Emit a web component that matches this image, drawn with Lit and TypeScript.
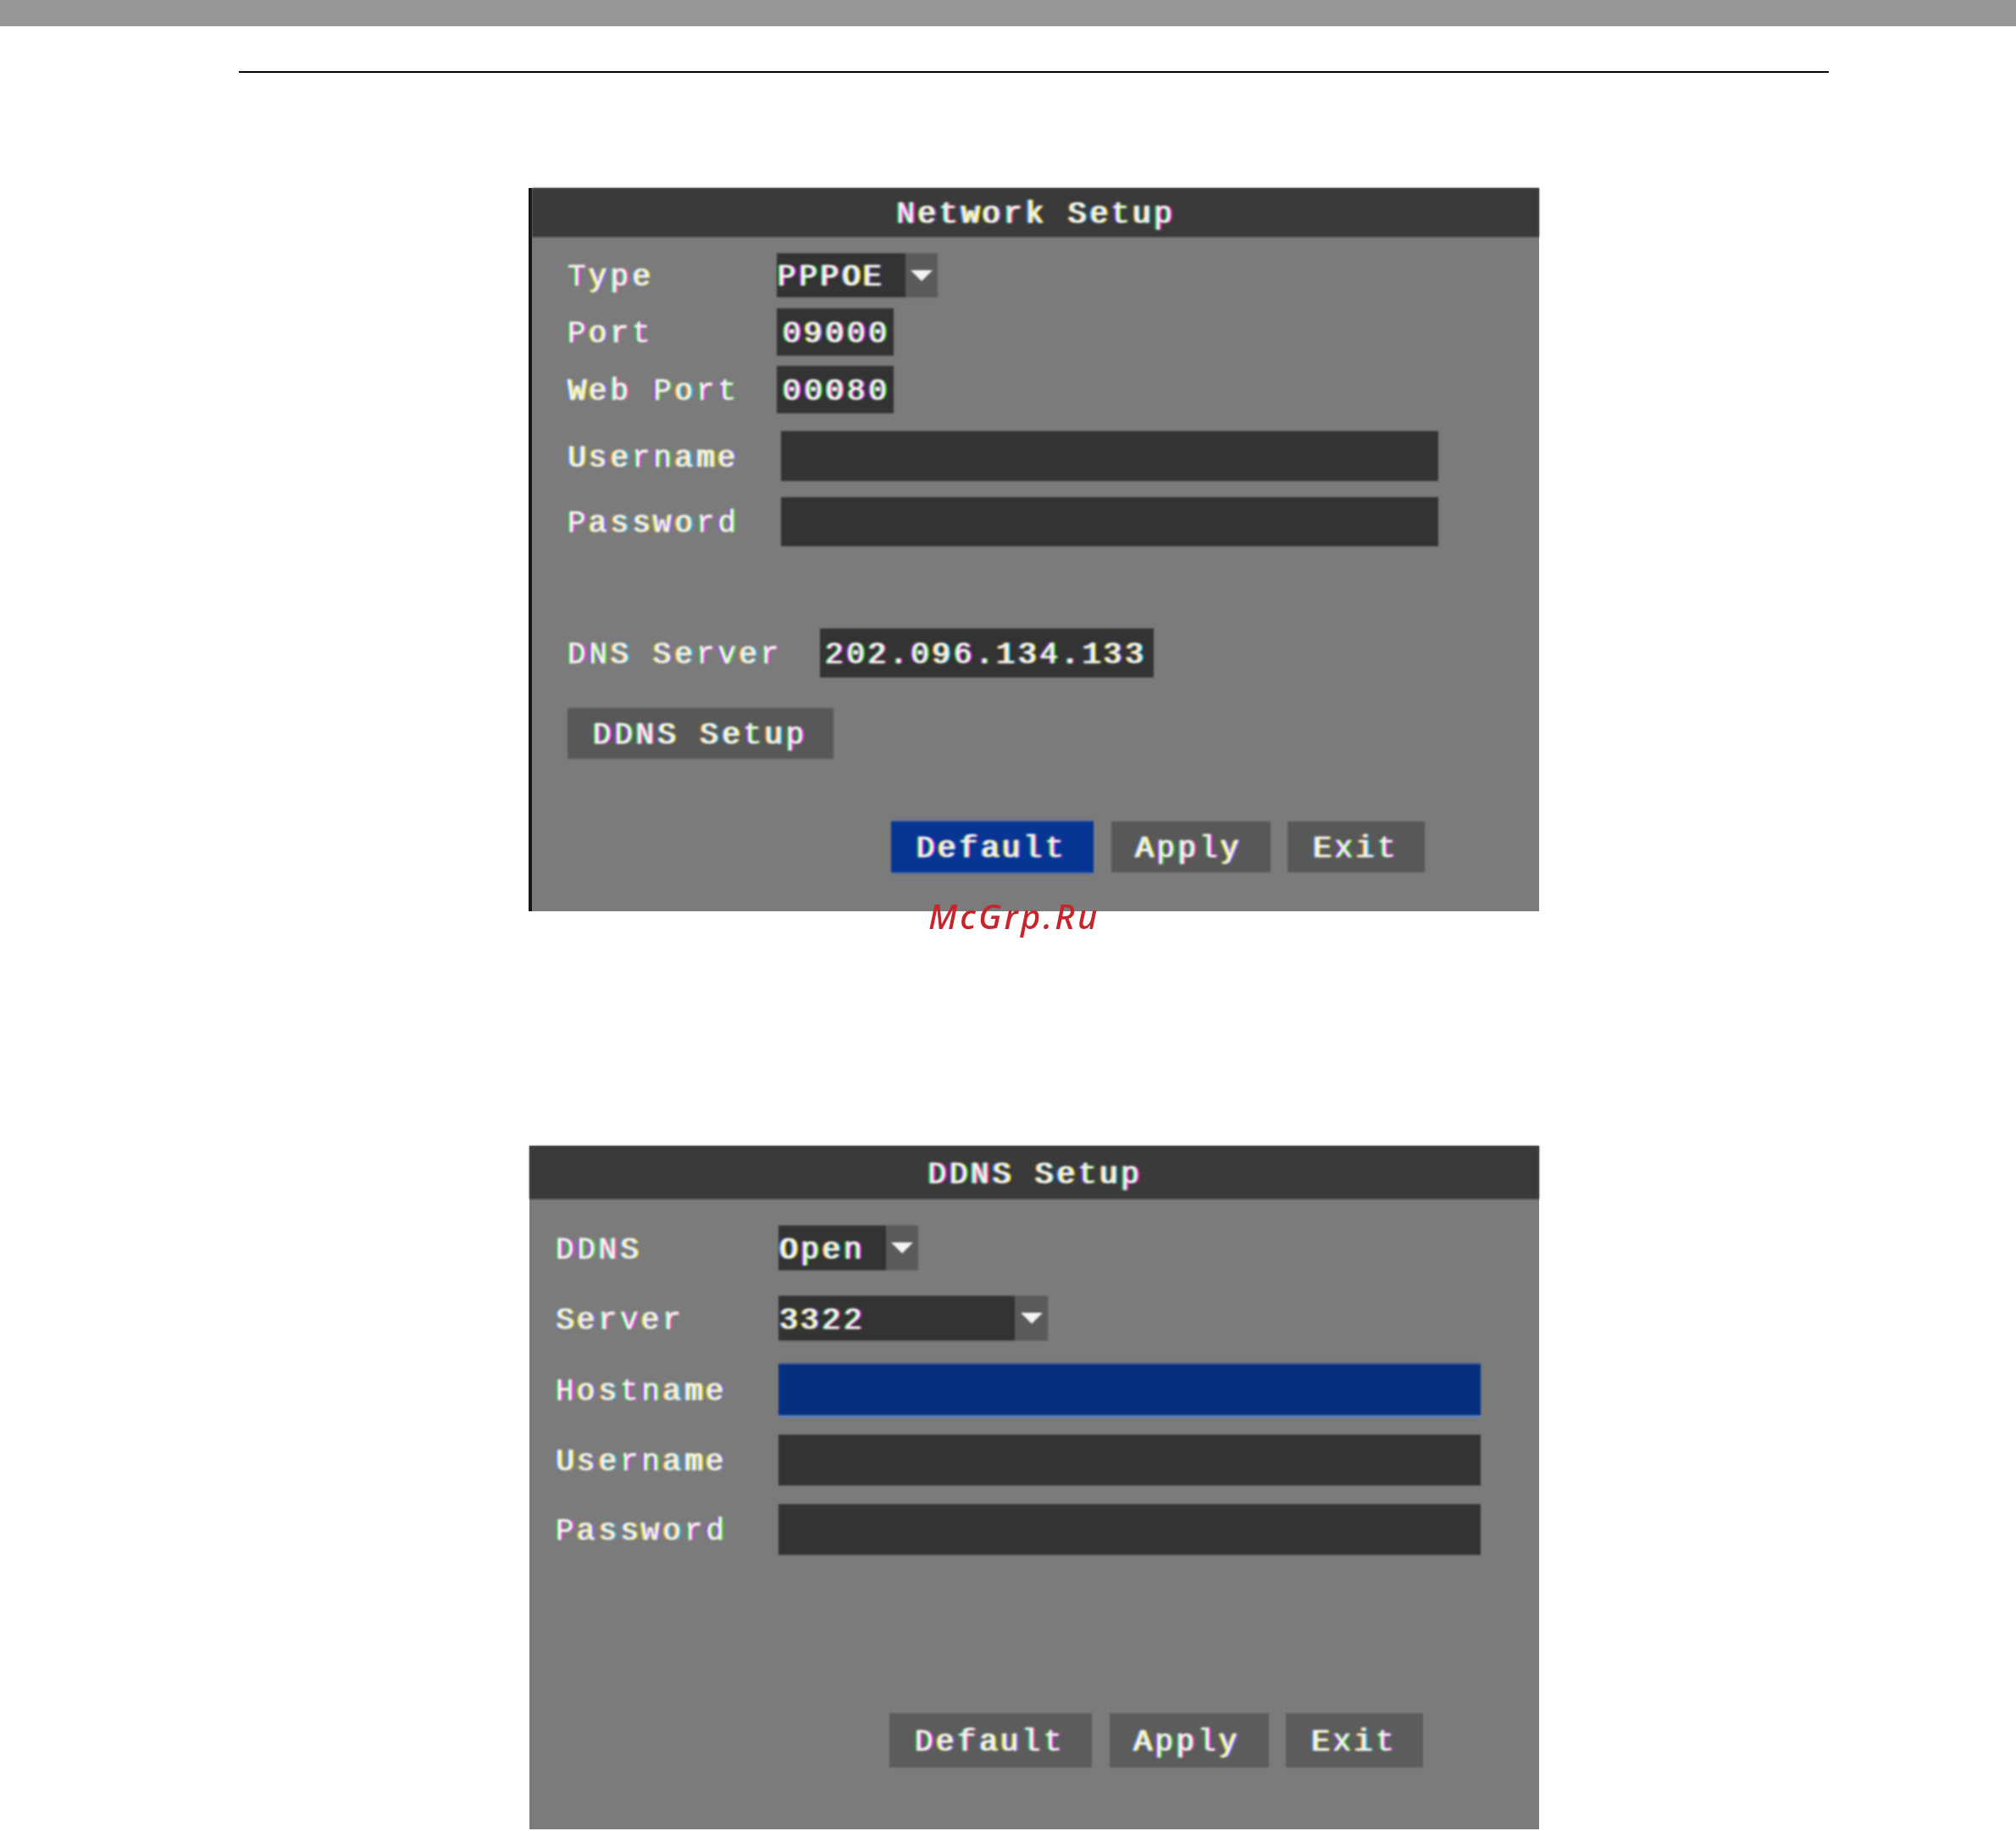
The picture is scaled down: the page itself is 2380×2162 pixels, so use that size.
import { LitElement, html, css } from "lit";
import { customElement } from "lit/decorators.js";

const fringe = (text: string) =>
  html`<span class="txt">${[...text].map((ch, i) =>
    ch === " " ? " " : html`<span class="c${(ch.charCodeAt(0) * 3 + i * 2) % 6}">${ch}</span>`
  )}</span>`;

const arrow = html`<svg class="arrow" viewBox="0 0 26 13"><path d="M0 0h26L13 13z" fill="#f4f4f4" /></svg>`;

@customElement("app-root")
export class AppRoot extends LitElement {
  static styles = css`
    :host { display: block; width: 2380px; height: 2162px; background: #fff; overflow: hidden; position: relative; }
    .band { height: 31px; background: #979797; }
    .rule { height: 2px; background: #000; margin: 53px 221px 0 282px; }
    .panel {
      width: 1193px; margin-left: 624px; background: #7b7b7b; box-sizing: border-box;
      font: 36px/1 "Liberation Mono", monospace; letter-spacing: 3.7px; color: #f4f4ec;
      -webkit-text-stroke: 0.4px #f4f4ec;
      white-space: pre; display: flex; flex-direction: column;
    }
    .txt { position: relative; top: 3px; }
    .soft { filter: blur(0.8px); display: flex; flex-direction: column; flex: 1; }
    .first { margin-top: 136px; height: 854px; border-left: 4px solid #161616; }
    .second { margin-top: 277px; margin-left: 625px; width: 1192px; height: 807px; }
    .title { background: #3a3a3a; display: flex; align-items: center; justify-content: center; height: 58px; padding-left: 1px; }
    .second .title { height: 63px; padding-left: 2px; }
    .rows { padding: 19px 0 0 42px; display: flex; flex-direction: column; flex: 1; }
    .second .rows { padding: 31px 0 0 31px; }
    .row { display: flex; align-items: center; }
    .label { width: 247px; flex: none; }
    .second .label { width: 263px; }
    .box { background: #333; display: flex; align-items: center; box-sizing: border-box; }
    .select { display: flex; }
    .select .box { padding-left: 1px; }
    .drop { background: #5a5a5a; display: flex; align-items: center; justify-content: center; }
    .arrow { width: 26px; height: 13px; }
    .sel-type { height: 52px; }
    .sel-type .box { width: 152px; }
    .sel-type .drop { width: 38px; }
    .num { width: 138px; height: 56px; padding-left: 7px; }
    .mt-13 { margin-top: 13px; }
    .mt-12 { margin-top: 12px; }
    .mt-21 { margin-top: 21px; }
    .mt-19 { margin-top: 19px; }
    .wide { width: 776px; height: 59px; margin-left: 5px; }
    .wide-2 { height: 58px; }
    .dns { margin-top: 97px; }
    .dns .label { width: 298px; }
    .dns .box { width: 394px; height: 58px; padding-left: 6px; }
    .btn { background: #585858; height: 60px; display: flex; align-items: center; box-sizing: border-box; padding-left: 30px; }
    .setup { width: 314px; margin-top: 36px; }
    .actions { display: flex; margin: 74px 0 0 382px; }
    .blue { background: #063593; box-shadow: 0 2px 0 #4d6fb4, 0 -2px 0 #5d6f96; }
    .w-default { width: 239px; }
    .w-apply { width: 188px; margin-left: 21px; padding-left: 28px; }
    .w-exit { width: 162px; margin-left: 20px; }
    .sel-open { height: 53px; }
    .sel-open .box { width: 127px; }
    .sel-open .drop { width: 38px; }
    .sel-server { height: 53px; }
    .sel-server .box { width: 279px; }
    .sel-server .drop { width: 39px; }
    .field { width: 829px; height: 60px; background: #333; }
    .field.blue { background: #04307f; box-shadow: 0 3px 0 #5f80c2, 0 -2px 0 #4b618f; }
    .mt-30 { margin-top: 30px; }
    .mt-28 { margin-top: 28px; }
    .mt-23 { margin-top: 23px; }
    .mt-22 { margin-top: 22px; }
    .second .actions { margin: 187px 0 0 394px; }
    .second .btn { height: 64px; background: #5c5c5c; }
    .c0 { text-shadow: 2px 0 #ff30ff, -2px 0 #20c050; }
    .c1 { text-shadow: 2px 0 #30c8ff, -2px 0 #ffa830; }
    .c2 { text-shadow: 2px 0 #50e030, -2px 0 #9040ff; }
    .c3 { text-shadow: 2px 0 #ffe030, -2px 0 #4090ff; }
    .c4 { text-shadow: 2px 0 #ff50a0, -2px 0 #40e0c0; }
    .c5 { text-shadow: 2px 0 #9060ff, -2px 0 #d0e030; }
    .mark {
      position: absolute; left: 1096px; top: 1058px; color: #c8242b;
      font: italic 500 40px/48px "Noto Sans", sans-serif; letter-spacing: 3.2px;
    }
  `;

  render() {
    return html`
      <div class="band"></div>
      <div class="rule"></div>
      <section class="panel first">
        <div class="soft">
          <div class="title">${fringe("Network Setup")}</div>
          <div class="rows">
            <div class="row">
              <div class="label">${fringe("Type")}</div>
              <div class="select sel-type"><div class="box">${fringe("PPPOE")}</div><div class="drop">${arrow}</div></div>
            </div>
            <div class="row mt-13">
              <div class="label">${fringe("Port")}</div>
              <div class="box num">${fringe("09000")}</div>
            </div>
            <div class="row mt-12">
              <div class="label">${fringe("Web Port")}</div>
              <div class="box num">${fringe("00080")}</div>
            </div>
            <div class="row mt-21">
              <div class="label">${fringe("Username")}</div>
              <div class="box wide"></div>
            </div>
            <div class="row mt-19">
              <div class="label">${fringe("Password")}</div>
              <div class="box wide wide-2"></div>
            </div>
            <div class="row dns">
              <div class="label">${fringe("DNS Server")}</div>
              <div class="box">${fringe("202.096.134.133")}</div>
            </div>
            <div class="btn setup">${fringe("DDNS Setup")}</div>
            <div class="actions">
              <div class="btn blue w-default">${fringe("Default")}</div>
              <div class="btn w-apply">${fringe("Apply")}</div>
              <div class="btn w-exit">${fringe("Exit")}</div>
            </div>
          </div>
        </div>
      </section>
      <section class="panel second">
        <div class="soft">
          <div class="title">${fringe("DDNS Setup")}</div>
          <div class="rows">
            <div class="row">
              <div class="label">${fringe("DDNS")}</div>
              <div class="select sel-open"><div class="box">${fringe("Open")}</div><div class="drop">${arrow}</div></div>
            </div>
            <div class="row mt-30">
              <div class="label">${fringe("Server")}</div>
              <div class="select sel-server"><div class="box">${fringe("3322")}</div><div class="drop">${arrow}</div></div>
            </div>
            <div class="row mt-28">
              <div class="label">${fringe("Hostname")}</div>
              <div class="field blue"></div>
            </div>
            <div class="row mt-23">
              <div class="label">${fringe("Username")}</div>
              <div class="field"></div>
            </div>
            <div class="row mt-22">
              <div class="label">${fringe("Password")}</div>
              <div class="field"></div>
            </div>
            <div class="actions">
              <div class="btn w-default">${fringe("Default")}</div>
              <div class="btn w-apply">${fringe("Apply")}</div>
              <div class="btn w-exit">${fringe("Exit")}</div>
            </div>
          </div>
        </div>
      </section>
      <div class="mark">McGrp.Ru</div>
    `;
  }
}
